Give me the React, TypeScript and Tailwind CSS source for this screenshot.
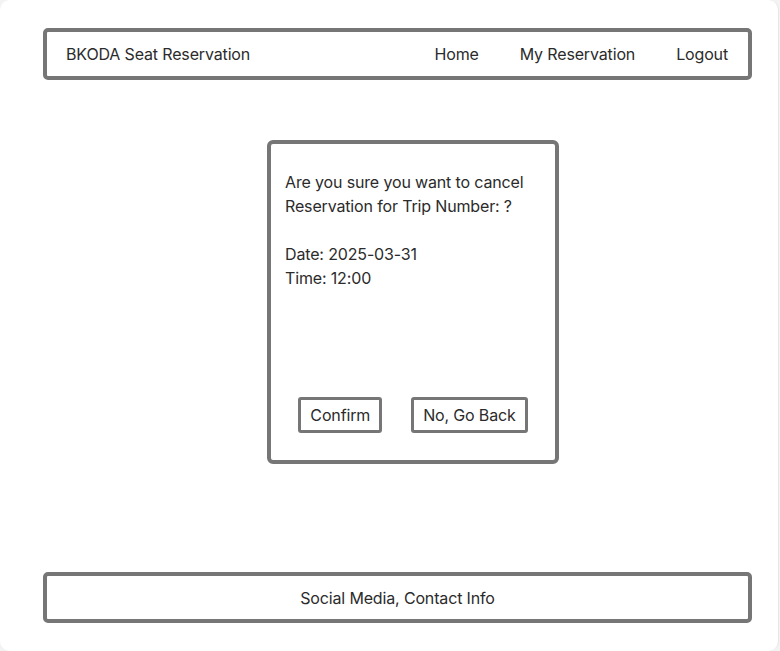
export default function App() {
    return (
        <div className="w-[780px] h-[651px] bg-[#f3f3f3]" style={{fontFamily: 'Inter, "Liberation Sans", sans-serif'}}>
            <div className="w-[779px] h-[651px] bg-white rounded-[10px] border-r border-[#e6e6e6] flex flex-col pt-[28px] pb-[28px] pl-[43px] pr-[26px] text-[16px] leading-6 tracking-[-0.15px] text-[#2b2b2b]">
                {/* header */}
                <header className="h-[52px] border-4 border-[#767676] rounded-[5px] flex items-center justify-between pl-[19px] pr-[20px]">
                    <span>BKODA Seat Reservation</span>
                    <nav className="flex items-center gap-[41px]">
                        <span>Home</span>
                        <span>My Reservation</span>
                        <span>Logout</span>
                    </nav>
                </header>

                {/* cancel dialog */}
                <div className="mt-[60px] ml-[224px] w-[292px] h-[324px] border-4 border-[#767676] rounded-[6px] flex flex-col px-[14px] pt-[26px] pb-[27px]">
                    <p>Are you sure you want to cancel<br/>Reservation for Trip Number: ?</p>
                    <p className="mt-6">Date: 2025-03-31<br/>Time: 12:00</p>
                    <div className="mt-auto flex justify-center gap-[29px]">
                        <button className="h-[36px] border-[3px] border-[#767676] rounded-[3px] px-[9px]">Confirm</button>
                        <button className="h-[36px] border-[3px] border-[#767676] rounded-[3px] px-[9px]">No, Go Back</button>
                    </div>
                </div>

                {/* footer */}
                <footer className="mt-auto h-[51px] border-4 border-[#767676] rounded-[5px] flex items-center justify-center">
                    Social Media, Contact Info
                </footer>
            </div>
        </div>
    );
}
